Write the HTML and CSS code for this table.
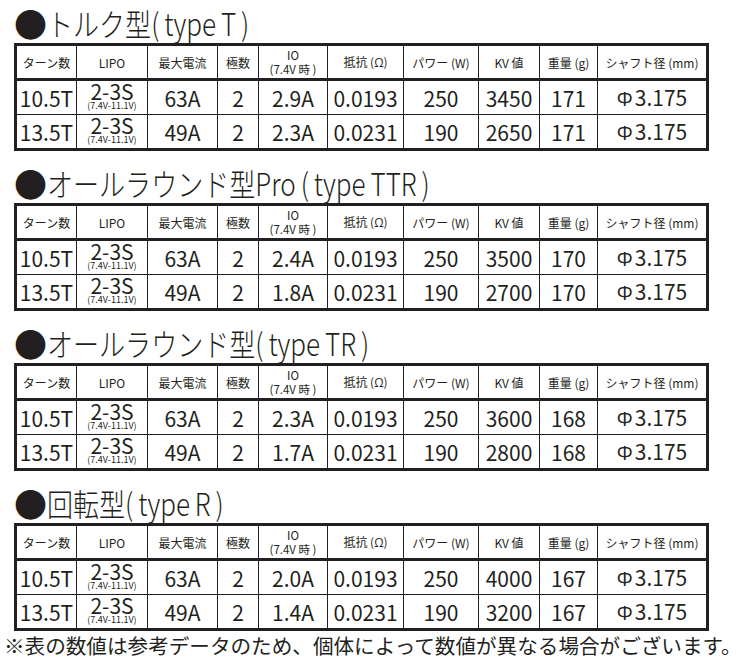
FILE: index.html
```html
<!DOCTYPE html>
<html lang="ja">
<head>
<meta charset="utf-8">
<title>モーター仕様</title>
<link rel="stylesheet" href="styles.css">
</head>
<body>
<main class="page">
  <div class="specs">
    <section class="spec">
      <h2 class="spec-title"><span class="dot">●</span><span class="tx">トルク型( type T )</span></h2>
      <table class="spec-table">
        <colgroup>
          <col class="c1"><col class="c2"><col class="c3"><col class="c4"><col class="c5">
          <col class="c6"><col class="c7"><col class="c8"><col class="c9"><col class="c10">
        </colgroup>
        <thead>
          <tr><th>ターン数</th><th>LIPO</th><th>最大電流</th><th>極数</th><th class="two">IO<br>(7.4V 時 )</th><th>抵抗 (<span class="gr">Ω</span>)</th><th>パワー (W)</th><th>KV 値</th><th>重量 (g)</th><th>シャフト径 (mm)</th></tr>
        </thead>
        <tbody>
          <tr><td>10.5T</td><td class="lipo"><span class="big">2-3S</span><span class="small">(7.4V-11.1V)</span></td><td>63A</td><td>2</td><td>2.9A</td><td>0.0193</td><td>250</td><td>3450</td><td>171</td><td><span class="gr">Φ</span>3.175</td></tr>
          <tr><td>13.5T</td><td class="lipo"><span class="big">2-3S</span><span class="small">(7.4V-11.1V)</span></td><td>49A</td><td>2</td><td>2.3A</td><td>0.0231</td><td>190</td><td>2650</td><td>171</td><td><span class="gr">Φ</span>3.175</td></tr>
        </tbody>
      </table>
    </section>
    <section class="spec">
      <h2 class="spec-title"><span class="dot">●</span><span class="tx">オールラウンド型Pro ( type TTR )</span></h2>
      <table class="spec-table">
        <colgroup>
          <col class="c1"><col class="c2"><col class="c3"><col class="c4"><col class="c5">
          <col class="c6"><col class="c7"><col class="c8"><col class="c9"><col class="c10">
        </colgroup>
        <thead>
          <tr><th>ターン数</th><th>LIPO</th><th>最大電流</th><th>極数</th><th class="two">IO<br>(7.4V 時 )</th><th>抵抗 (<span class="gr">Ω</span>)</th><th>パワー (W)</th><th>KV 値</th><th>重量 (g)</th><th>シャフト径 (mm)</th></tr>
        </thead>
        <tbody>
          <tr><td>10.5T</td><td class="lipo"><span class="big">2-3S</span><span class="small">(7.4V-11.1V)</span></td><td>63A</td><td>2</td><td>2.4A</td><td>0.0193</td><td>250</td><td>3500</td><td>170</td><td><span class="gr">Φ</span>3.175</td></tr>
          <tr><td>13.5T</td><td class="lipo"><span class="big">2-3S</span><span class="small">(7.4V-11.1V)</span></td><td>49A</td><td>2</td><td>1.8A</td><td>0.0231</td><td>190</td><td>2700</td><td>170</td><td><span class="gr">Φ</span>3.175</td></tr>
        </tbody>
      </table>
    </section>
    <section class="spec">
      <h2 class="spec-title"><span class="dot">●</span><span class="tx">オールラウンド型( type TR )</span></h2>
      <table class="spec-table">
        <colgroup>
          <col class="c1"><col class="c2"><col class="c3"><col class="c4"><col class="c5">
          <col class="c6"><col class="c7"><col class="c8"><col class="c9"><col class="c10">
        </colgroup>
        <thead>
          <tr><th>ターン数</th><th>LIPO</th><th>最大電流</th><th>極数</th><th class="two">IO<br>(7.4V 時 )</th><th>抵抗 (<span class="gr">Ω</span>)</th><th>パワー (W)</th><th>KV 値</th><th>重量 (g)</th><th>シャフト径 (mm)</th></tr>
        </thead>
        <tbody>
          <tr><td>10.5T</td><td class="lipo"><span class="big">2-3S</span><span class="small">(7.4V-11.1V)</span></td><td>63A</td><td>2</td><td>2.3A</td><td>0.0193</td><td>250</td><td>3600</td><td>168</td><td><span class="gr">Φ</span>3.175</td></tr>
          <tr><td>13.5T</td><td class="lipo"><span class="big">2-3S</span><span class="small">(7.4V-11.1V)</span></td><td>49A</td><td>2</td><td>1.7A</td><td>0.0231</td><td>190</td><td>2800</td><td>168</td><td><span class="gr">Φ</span>3.175</td></tr>
        </tbody>
      </table>
    </section>
    <section class="spec">
      <h2 class="spec-title"><span class="dot">●</span><span class="tx">回転型( type R )</span></h2>
      <table class="spec-table">
        <colgroup>
          <col class="c1"><col class="c2"><col class="c3"><col class="c4"><col class="c5">
          <col class="c6"><col class="c7"><col class="c8"><col class="c9"><col class="c10">
        </colgroup>
        <thead>
          <tr><th>ターン数</th><th>LIPO</th><th>最大電流</th><th>極数</th><th class="two">IO<br>(7.4V 時 )</th><th>抵抗 (<span class="gr">Ω</span>)</th><th>パワー (W)</th><th>KV 値</th><th>重量 (g)</th><th>シャフト径 (mm)</th></tr>
        </thead>
        <tbody>
          <tr><td>10.5T</td><td class="lipo"><span class="big">2-3S</span><span class="small">(7.4V-11.1V)</span></td><td>63A</td><td>2</td><td>2.0A</td><td>0.0193</td><td>250</td><td>4000</td><td>167</td><td><span class="gr">Φ</span>3.175</td></tr>
          <tr><td>13.5T</td><td class="lipo"><span class="big">2-3S</span><span class="small">(7.4V-11.1V)</span></td><td>49A</td><td>2</td><td>1.4A</td><td>0.0231</td><td>190</td><td>3200</td><td>167</td><td><span class="gr">Φ</span>3.175</td></tr>
        </tbody>
      </table>
    </section>
  </div>
  <p class="note">※表の数値は参考データのため、個体によって数値が異なる場合がございます。</p>
</main>
</body>
</html>
```

FILE: styles.css
```css
html, body {
  margin: 0;
  padding: 0;
  background: #ffffff;
}

body {
  color: #231f20;
  font-family: "Noto Sans CJK JP", sans-serif;
}

.page {
  width: 737px;
}

.specs {
  display: flex;
  flex-direction: column;
  gap: 9px;
}

.spec {
  margin-left: 14px;
}

.spec-title {
  margin: 0;
  padding-top: 3px;
  height: 40px;
  font-size: 31px;
  font-weight: 300;
  line-height: 40px;
  white-space: nowrap;
  overflow: visible;
}

.spec-title .dot {
  font-size: 33px;
  font-weight: 400;
  vertical-align: -1px;
}

.spec-title .tx {
  display: inline-block;
  transform: scaleX(0.84);
  transform-origin: 0 50%;
  word-spacing: -1px;
}

.spec-table {
  border-collapse: collapse;
  table-layout: fixed;
  width: 695px;
  border: 3px solid #231f20;
}

.c1 { width: 61px; }
.c2 { width: 71px; }
.c3 { width: 70px; }
.c4 { width: 41px; }
.c5 { width: 69px; }
.c6 { width: 76px; }
.c7 { width: 75px; }
.c8 { width: 61px; }
.c9 { width: 58px; }
.c10 { width: 110px; }

.spec-table th,
.spec-table td {
  border: 1.5px solid #231f20;
  padding: 0;
  text-align: center;
  vertical-align: middle;
  white-space: nowrap;
  overflow: hidden;
}

.spec-table thead tr {
  height: 35px;
}

.spec-table thead th {
  border-bottom: 3px solid #231f20;
  font-size: 12px;
  font-weight: 400;
  line-height: 15px;
}

.spec-table th.two {
  font-size: 11.5px;
  line-height: 14px;
}

.spec-table tbody tr {
  height: 35px;
}

.spec-table td {
  font-size: 21px;
  line-height: 24px;
}

.gr {
  font-family: "Open Sans", sans-serif;
}

.spec-table td .gr {
  font-size: 20px;
  margin-right: 2px;
}

.lipo .big {
  display: block;
  font-size: 21px;
  line-height: 18px;
  margin-top: -3px;
}

.lipo .small {
  display: block;
  margin-top: 1px;
  font-size: 9px;
  line-height: 9px;
}

.note {
  margin: 0 0 0 4px;
  font-size: 20.6px;
  line-height: 28px;
  white-space: nowrap;
}
```
